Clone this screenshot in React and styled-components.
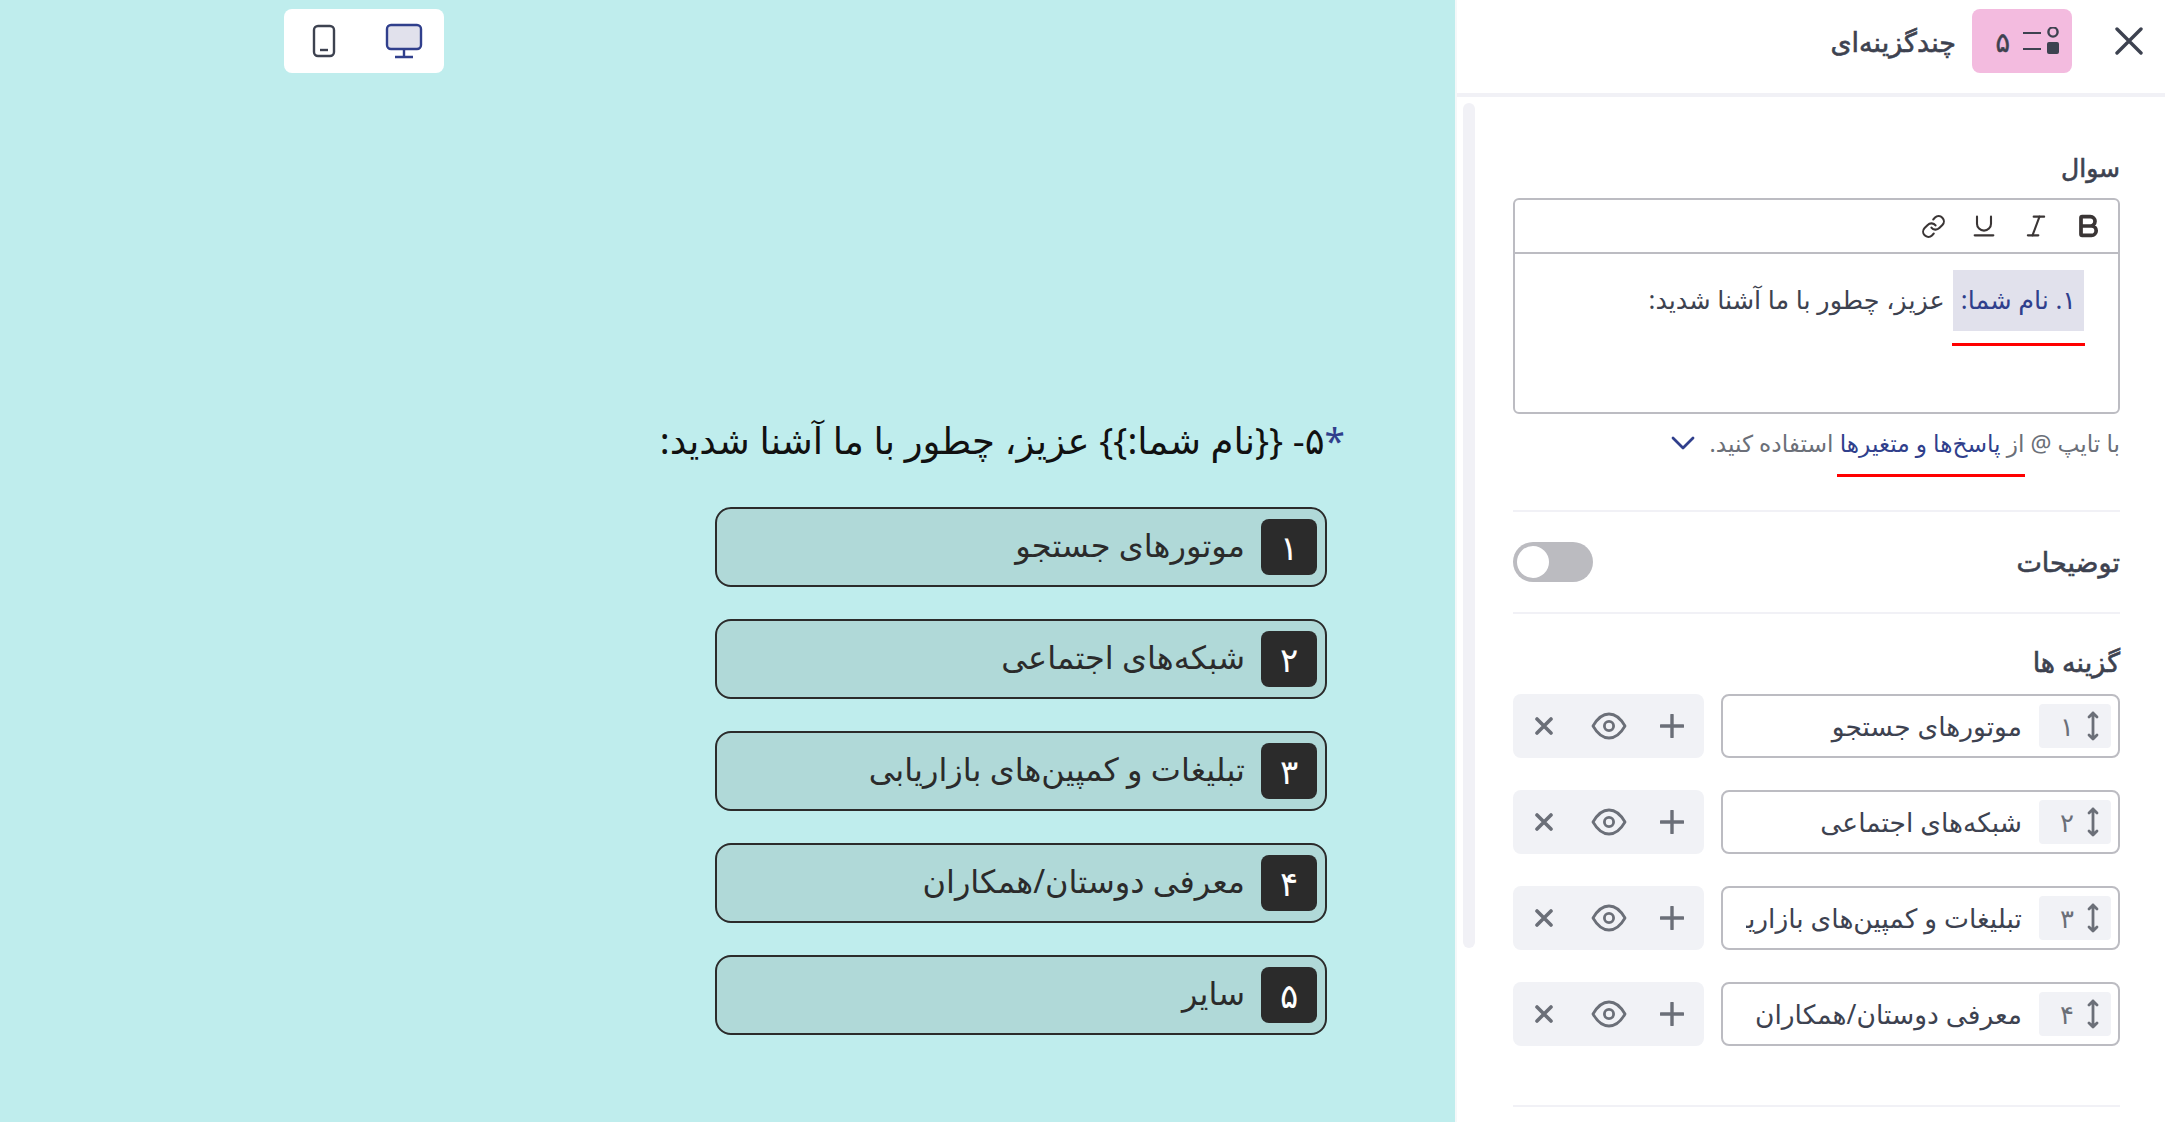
import React from "react";
import styled, { createGlobalStyle } from "styled-components";
import { Underline, Italic, Link, Bold } from "lucide-react";

const Global = createGlobalStyle`
  html, body { margin: 0; padding: 0; height: 100%; overflow: hidden; }
  body { font-family: "Noto Sans", "DejaVu Sans", sans-serif; background: #fff; color: #3d4250; }
  * { box-sizing: border-box; }
`;

const Shell = styled.div`
  display: flex;
  width: 2165px;
  height: 1122px;
  overflow: hidden;
`;
const Canvas = styled.main`
  position: relative;
  flex: 1;
  background: #bfeded;
  direction: rtl;
  padding: 415px 110px 0 0;
`;
const DeviceBar = styled.div`
  position: absolute;
  left: 284px;
  top: 9px;
  width: 160px;
  height: 64px;
  background: #fff;
  border-radius: 8px;
  display: flex;
  align-items: center;
  padding-left: 28px;
  gap: 49px;
  direction: ltr;
`;
const Question = styled.h1`
  margin: 0 0 42px;
  font-size: 37px;
  font-weight: 400;
  line-height: 50px;
  color: #111;
  white-space: nowrap;
`;
const Star = styled.span`
  color: #303f8c;
`;
const Choices = styled.div`
  display: flex;
  flex-direction: column;
  gap: 32px;
  width: 612px;
  margin-right: 18px;
`;
const Choice = styled.div`
  height: 80px;
  background: #b0d9d8;
  border: 2px solid #2b2b2b;
  border-radius: 16px;
  display: flex;
  align-items: center;
  padding-right: 8px;
  gap: 16px;
  font-size: 32px;
  color: #2b2b2b;
`;
const ChoiceLabel = styled.span`
  padding-bottom: 5px;
`;
const Key = styled.span`
  width: 56px;
  height: 56px;
  border-radius: 8px;
  background: #2b2b2b;
  color: #fff;
  display: flex;
  align-items: center;
  justify-content: center;
  font-size: 34px;
`;

const Panel = styled.aside`
  position: relative;
  width: 710px;
  flex: none;
  background: #fff;
  border-left: 2px solid #f4f8f9;
  direction: rtl;
`;
const Header = styled.header`
  height: 97px;
  border-bottom: 4px solid #f1f1f6;
  display: flex;
  align-items: center;
  padding-right: 22px;
  padding-bottom: 11px;
`;
const CloseBtn = styled.span`
  display: flex;
  width: 28px;
  height: 28px;
  margin-left: 43px;
`;
const TypeBadge = styled.div`
  width: 100px;
  height: 64px;
  background: #f3bbdf;
  border-radius: 8px;
  display: flex;
  align-items: center;
  padding-right: 13px;
  gap: 13px;
  margin-left: 16px;
  font-size: 27px;
  -webkit-text-stroke: 0.5px #3d4250;
`;
const Title = styled.div`
  font-size: 27px;
  -webkit-text-stroke: 0.6px #3d4250;
`;
const Scroll = styled.div`
  position: absolute;
  left: 6px;
  top: 103px;
  width: 12px;
  height: 845px;
  border-radius: 6px;
  background: #f1f1f6;
`;
const Body = styled.div`
  padding: 50px 45px 0 56px;
`;
const Label = styled.div`
  height: 40px;
  line-height: 40px;
  font-size: ${(p) => p.$size || 27}px;
  -webkit-text-stroke: 0.6px #3d4250;
  margin-top: ${(p) => p.$top || 0}px;
`;
const Editor = styled.div`
  margin-top: 11px;
  height: 216px;
  border: 2px solid #bcbcc2;
  border-radius: 6px;
`;
const EditorTools = styled.div`
  height: 54px;
  border-bottom: 2px solid #bcbcc2;
  display: flex;
  align-items: center;
  padding-right: 16px;
  gap: 24px;
  color: #3a3535;
`;
const EditorText = styled.div`
  padding: 16px 34px 0 0;
  display: flex;
  align-items: flex-start;
  gap: 8px;
  font-size: 25.5px;
  line-height: 58px;
`;
const Mention = styled.span`
  position: relative;
  height: 61px;
  padding: 0 8px;
  background: #e1e1ec;
  color: #303f8c;
  white-space: nowrap;
  &::after {
    content: "";
    position: absolute;
    left: -1px;
    right: -1px;
    bottom: -15px;
    height: 3px;
    background: #f00;
  }
`;
const Hint = styled.div`
  margin-top: 14px;
  height: 30px;
  line-height: 30px;
  font-size: 23.3px;
  color: #6b6f78;
  display: flex;
  align-items: center;
  white-space: pre;
`;
const HintLink = styled.span`
  position: relative;
  color: #303f8c;
  &::after {
    content: "";
    position: absolute;
    left: -3px;
    right: -24px;
    bottom: -19px;
    height: 3px;
    background: #f00;
  }
`;
const HintChevron = styled.span`
  display: flex;
  margin-right: 14px;
`;
const Divider = styled.div`
  height: 2px;
  background: #f1f1f6;
  margin-top: ${(p) => p.$top || 0}px;
`;
const SwitchRow = styled.div`
  height: 100px;
  display: flex;
  align-items: center;
  justify-content: space-between;
`;
const Toggle = styled.div`
  width: 80px;
  height: 40px;
  border-radius: 20px;
  background: #bbbbc0;
  padding: 4px;
`;
const Knob = styled.div`
  width: 32px;
  height: 32px;
  border-radius: 50%;
  background: #fff;
`;
const Rows = styled.div`
  margin-top: 12px;
  display: flex;
  flex-direction: column;
  gap: 32px;
`;
const Row = styled.div`
  height: 64px;
  display: flex;
  gap: 17px;
`;
const Field = styled.div`
  width: 399px;
  height: 64px;
  border: 2px solid #bcbcc2;
  border-radius: 8px;
  display: flex;
  align-items: center;
  padding: 0 7px 0 23px;
  gap: 17px;
`;
const Handle = styled.div`
  flex: none;
  width: 72px;
  height: 44px;
  border-radius: 4px;
  background: #f1f2f6;
  display: flex;
  align-items: center;
  padding: 0 12px 0 0;
  gap: 6px;
  color: #6b6f78;
  font-size: 26px;
`;
const Num = styled.span`
  width: 28px;
  text-align: center;
`;
const OptionText = styled.div`
  flex: 1;
  min-width: 0;
  overflow: hidden;
  white-space: nowrap;
  font-size: 26.5px;
  color: #3d4250;
`;
const Actions = styled.div`
  width: 191px;
  height: 64px;
  background: #f1f2f6;
  border-radius: 8px;
  display: flex;
  align-items: center;
  padding: 0 20px 0 0;
`;
const EyeSvg = styled.svg`
  margin: 0 33px 0 38px;
`;

const C = "#6b6f78";
const Plus = () => (
  <svg width="24" height="24" viewBox="0 0 24 24"><path d="M12 1v22M1 12h22" stroke={C} strokeWidth="3.4" strokeLinecap="round" /></svg>
);
const Eye = () => (
  <EyeSvg width="36" height="28" viewBox="0 0 36 28" fill="none" stroke={C} strokeWidth="2.8">
    <path d="M2 14C6 7 11 2 18 2s12 5 16 12c-4 7-9 12-16 12S6 21 2 14Z" strokeLinejoin="round" />
    <circle cx="18" cy="14" r="4.6" />
  </EyeSvg>
);
const Cross = () => (
  <svg width="18" height="18" viewBox="0 0 18 18"><path d="M2 2l14 14M16 2L2 16" stroke={C} strokeWidth="3.6" strokeLinecap="round" /></svg>
);
const UpDown = () => (
  <svg width="12" height="30" viewBox="0 0 12 30" style={{ flex: "none" }} fill="none" stroke={C} strokeWidth="2.8" strokeLinecap="round" strokeLinejoin="round">
    <path d="M6 2v26M2 6l4-4 4 4M2 24l4 4 4-4" />
  </svg>
);

const Phone = () => (
  <svg width="24" height="34" viewBox="0 0 24 34" fill="none" stroke="#3d4250" strokeWidth="2.4">
    <rect x="2" y="2" width="20" height="30" rx="4" />
    <path d="M8 26h8" />
  </svg>
);
const Desktop = () => (
  <svg width="38" height="36" viewBox="0 0 38 36" fill="none" stroke="#303f8c" strokeWidth="2.4">
    <rect x="2" y="2" width="34" height="24" rx="4" fill="#e1e1ec" />
    <path d="M19 26v8M10 34h18" />
  </svg>
);
const Close = () => (
  <svg width="28" height="28" viewBox="0 0 28 28"><path d="M2 2l24 24M26 2L2 26" stroke="#3d4250" strokeWidth="3.4" strokeLinecap="round" /></svg>
);
const TypeIcon = () => (
  <svg width="36" height="28" viewBox="0 0 36 28" fill="none">
    <path d="M0 6h18M0 22h18" stroke="#3d4250" strokeWidth="2" />
    <circle cx="30" cy="5" r="4.6" stroke="#3d4250" strokeWidth="2.4" />
    <rect x="24" y="15" width="12" height="12" rx="2" fill="#3d4250" />
  </svg>
);
const Chevron = () => (
  <svg width="24" height="14" viewBox="0 0 24 14" fill="none"><path d="M2 2l10 10L22 2" stroke="#303f8c" strokeWidth="2.8" strokeLinecap="round" strokeLinejoin="round" /></svg>
);

const CHOICES = [
  ["۱", "موتورهای جستجو"],
  ["۲", "شبکه‌های اجتماعی"],
  ["۳", "تبلیغات و کمپین‌های بازاریابی"],
  ["۴", "معرفی دوستان/همکاران"],
  ["۵", "سایر"],
];

export default function App() {
  return (
    <Shell>
      <Global />
      <Canvas>
        <DeviceBar>
          <Phone />
          <Desktop />
        </DeviceBar>
        <Question>
          <Star>*</Star>۵- {"{{"}نام شما:{"}}"} عزیز، چطور با ما آشنا شدید:
        </Question>
        <Choices>
          {CHOICES.map(([k, t]) => (
            <Choice key={k}>
              <Key>{k}</Key>
              <ChoiceLabel>{t}</ChoiceLabel>
            </Choice>
          ))}
        </Choices>
      </Canvas>
      <Panel>
        <Header>
          <CloseBtn><Close /></CloseBtn>
          <TypeBadge>
            <TypeIcon />
            <span>۵</span>
          </TypeBadge>
          <Title>چندگزینه‌ای</Title>
        </Header>
        <Scroll />
        <Body>
          <Label $size={25}>سوال</Label>
          <Editor>
            <EditorTools>
              <Bold size={28} strokeWidth={3.2} />
              <Italic size={28} strokeWidth={1.8} />
              <Underline size={28} strokeWidth={1.8} />
              <Link size={25} strokeWidth={2} />
            </EditorTools>
            <EditorText>
              <Mention>۱. نام شما:</Mention>
              <span>عزیز، چطور با ما آشنا شدید:</span>
            </EditorText>
          </Editor>
          <Hint>
            <span>با تایپ @ از </span>
            <HintLink>پاسخ‌ها و متغیرها</HintLink>
            <span> استفاده کنید.</span>
            <HintChevron><Chevron /></HintChevron>
          </Hint>
          <Divider $top={52} />
          <SwitchRow>
            <Label>توضیحات</Label>
            <Toggle dir="ltr"><Knob /></Toggle>
          </SwitchRow>
          <Divider />
          <Label $top={28}>گزینه ها</Label>
          <Rows>
            {CHOICES.slice(0, 4).map(([k, t]) => (
              <Row key={k}>
                <Field>
                  <Handle>
                    <UpDown />
                    <Num>{k}</Num>
                  </Handle>
                  <OptionText>{t}</OptionText>
                </Field>
                <Actions>
                  <Plus />
                  <Eye />
                  <Cross />
                </Actions>
              </Row>
            ))}
          </Rows>
          <Divider $top={59} />
        </Body>
      </Panel>
    </Shell>
  );
}
